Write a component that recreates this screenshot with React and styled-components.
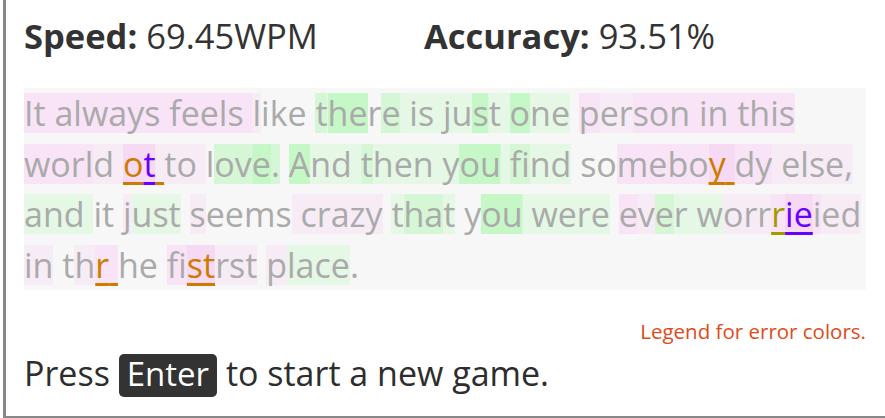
import React from "react";
import styled, { createGlobalStyle } from "styled-components";

const GlobalStyle = createGlobalStyle`
  html, body {
    margin: 0;
    background: #fff;
    font-family: "Open Sans", "Noto Sans", sans-serif;
    color: #333;
  }
`;

// background shades: pink = slow keys, green = fast keys
const shades = {
  n: null,
  p1: "#f7ecf6",
  p2: "#f8e4f6",
  p3: "#f6daf4",
  g1: "#e5f7e5",
  g2: "#d5f7d5",
  g3: "#c6f7c6",
};

const tones = {
  o: "#cf7b00",
  v: "#6a00ff",
  y: "#a39a00",
};

const passage = [
  ["It always feels ", "p2"], ["l", "p1"], ["ike ", "n"], ["t", "g2"], ["he", "g3"],
  ["r", "n"], ["e", "g2"], [" is ", "g1"], ["ju", "g1"], ["s", "g3"], ["t ", "g1"],
  ["o", "g3"], ["ne", "g1"], [" ", "n"], ["p", "p2"], ["er", "p1"], ["son in this", "p2"],
  [" ", "n"],
  ["worl", "p2"], ["d ", "p1"], ["o", "p3", "o"], ["t", "p3", "v"], [" ", "p1", "o"],
  ["to ", "p1"], ["l", "n"], ["ov", "g2"], ["e", "g3"], [".", "g2"], [" ", "n"],
  ["A", "g3"], ["nd ", "g1"], ["t", "g2"], ["hen ", "g1"], ["y", "g1"], ["ou", "g3"],
  [" ", "g1"], ["fi", "g2"], ["nd", "g1"], [" so", "n"], ["mebo", "p2"],
  ["y", "p3", "o"], [" ", "p3", "o"], ["dy", "p2"], [" else,", "p1"], [" ", "n"],
  ["and ", "g1"], ["it ", "n"], ["j", "p1"], ["ust", "g1"], [" ", "n"], ["s", "p1"],
  ["eems", "n"], [" crazy", "p1"], [" ", "n"], ["t", "g1"], ["ha", "g2"], ["t", "g1"],
  [" y", "n"], ["ou", "g3"], [" were", "g1"], [" ", "n"], ["e", "p2"], ["v", "p1"],
  ["e", "g2"], ["r w", "g1"], ["orr", "p1"], ["r", "p2", "y"], ["ie", "p3", "v"],
  ["i", "p2"], ["ed", "p1"], [" ", "n"],
  ["in", "p1"], [" t", "n"], ["h", "p1"], ["r", "p2", "o"], [" ", "p2", "o"],
  ["he ", "n"], ["fi", "p2"], ["st", "p3", "o"], ["rst", "p1"], [" ", "n"],
  ["p", "p1"], ["lace", "g1"], [".", "n"],
];

const Card = styled.div`
  margin-left: 3px;
  border-left: 3px solid #888;
  border-bottom: 3px solid #888;
  padding: 16px 0 19px 18px;
`;

const Column = styled.div`
  width: 842px;
  display: flex;
  flex-direction: column;
`;

const Stats = styled.div`
  display: flex;
  height: 40px;
  line-height: 40px;
  font-size: 34.5px;
  color: #333;
`;

const Stat = styled.div`
  width: 400px;
  white-space: nowrap;
`;

const StatLabel = styled.span`
  font-weight: 700;
`;

const Passage = styled.p`
  margin: 32px 0 0;
  background: #f7f7f7;
  font-size: 34px;
  line-height: 50.5px;
  color: #aaa;
`;

const Char = styled.span`
  background-image: ${({ $bg }) =>
    shades[$bg] ? `linear-gradient(${shades[$bg]}, ${shades[$bg]})` : "none"};
  background-size: 100% 40px;
  background-position: center;
  background-repeat: no-repeat;
  color: ${({ $tone }) => tones[$tone] || "inherit"};
  text-decoration: ${({ $tone }) => ($tone ? "underline" : "none")};
  text-decoration-color: ${({ $tone }) => tones[$tone] || "transparent"};
  text-decoration-thickness: 3px;
  text-underline-offset: 5px;
  text-decoration-skip-ink: none;
`;

const Legend = styled.div`
  margin-top: 29px;
  text-align: right;
  font-size: 20.5px;
  line-height: 24px;
  color: #e04a1a;
`;

const Prompt = styled.div`
  margin-top: 9px;
  font-size: 34px;
  line-height: 43px;
  color: #2d2d2d;
  white-space: nowrap;
`;

const Key = styled.kbd`
  display: inline-block;
  height: 43px;
  padding: 0 8px;
  border-radius: 5px;
  background: #333;
  color: #fff;
  font-family: inherit;
  font-size: 33px;
  line-height: 40px;
`;

export default function App() {
  return (
    <>
      <GlobalStyle />
      <Card>
        <Column>
          <Stats>
            <Stat>
              <StatLabel>Speed:</StatLabel> 69.45WPM
            </Stat>
            <Stat>
              <StatLabel>Accuracy:</StatLabel> 93.51%
            </Stat>
          </Stats>
          <Passage>
            {passage.map(([text, bg, tone], i) => (
              <Char key={i} $bg={bg} $tone={tone}>
                {text}
              </Char>
            ))}
          </Passage>
          <Legend>Legend for error colors.</Legend>
          <Prompt>
            Press <Key>Enter</Key> to start a new game.
          </Prompt>
        </Column>
      </Card>
    </>
  );
}
